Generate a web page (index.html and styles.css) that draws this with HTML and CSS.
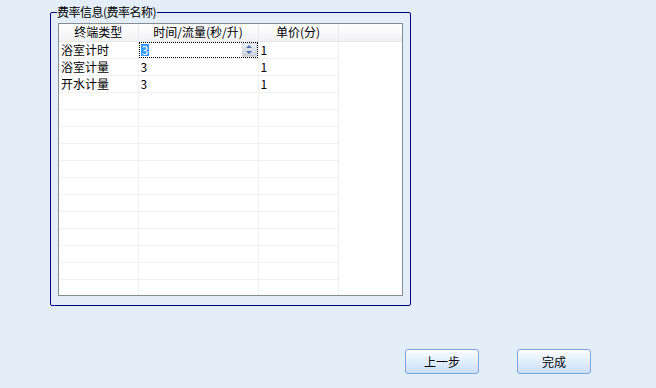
FILE: index.html
```html
<!DOCTYPE html>
<html lang="zh-CN">
  <head>
    <meta charset="UTF-8" />
    <title>费率信息</title>
    <link rel="stylesheet" href="styles.css">
  </head>
  <body>
    <fieldset class="group">
      <legend>费率信息(费率名称)</legend>
      <div class="grid">
        <table>
          <thead>
            <tr>
              <th class="c1">终端类型</th>
              <th class="c2">时间/流量(秒/升)</th>
              <th class="c3">单价(分)</th>
              <th class="c4"></th>
            </tr>
          </thead>
          <tbody id="rows">
            <tr>
              <td>浴室计时</td>
              <td class="edit">
                <div class="spin">
                  <span class="sel">3</span>
                  <span class="arrows">
                    <i class="up"></i>
                    <i class="down"></i>
                  </span>
                </div>
              </td>
              <td>1</td>
              <td class="blank"></td>
            </tr>
            <tr>
              <td>浴室计量</td>
              <td>3</td>
              <td>1</td>
              <td class="blank"></td>
            </tr>
            <tr>
              <td>开水计量</td>
              <td>3</td>
              <td>1</td>
              <td class="blank"></td>
            </tr>
          </tbody>
        </table>
      </div>
    </fieldset>

    <div class="btns">
      <button>上一步</button>
      <button>完成</button>
    </div>
    <script>
      // fill the empty grid lines
      let tbody = document.getElementById("rows");
      for (let i = 0; i < 12; i++) {
        let tr = tbody.insertRow(-1);
        for (let j = 0; j < 4; j++) {
          let td = tr.insertCell(j);
          if (j == 3) td.className = "blank";
        }
      }
    </script>
  </body>
</html>
```

FILE: styles.css
```css
* {
  padding: 0;
  margin: 0;
  box-sizing: border-box;
}
html,
body {
  height: 100%;
}
body {
  background: #e3eef9;
  font-family: "Noto Sans CJK SC", "DejaVu Sans", sans-serif;
  font-size: 12px;
  color: #000;
  overflow: hidden;
}
.group {
  width: 361px;
  height: 301px;
  margin: 5px 0 0 50px;
  border: 1px solid #000080;
  border-radius: 2px;
  padding: 4px 7px 9px 7px;
}
.group legend {
  padding: 0 1px 0 0;
  margin-left: -1px;
  line-height: 13px;
  height: 14px;
  font-size: 12px;
  letter-spacing: -0.5px;
}
.grid {
  width: 345px;
  height: 273px;
  border: 1px solid #858b93;
  background: #fff;
  overflow: hidden;
}
table {
  border-collapse: collapse;
  table-layout: fixed;
  width: 343px;
}
th,
td {
  height: 17px;
  padding: 0 0 0 2px;
  line-height: 16px;
  font-weight: normal;
  text-align: left;
  white-space: nowrap;
  border-right: 1px solid #f0f0f0;
  border-bottom: 1px solid #f0f0f0;
  overflow: hidden;
}
th {
  text-align: center;
  padding: 0;
  background: linear-gradient(#ffffff, #f2f2f4);
  border-bottom: 1px solid #e4e6ea;
  border-right: 1px solid #e8e8ea;
}
.c1 {
  width: 79px;
}
.c2 {
  width: 120px;
}
.c3 {
  width: 80px;
}
.blank,
.c4 {
  border-right: none;
}
td.blank {
  border-bottom: none;
}
td.edit {
  padding: 0;
}
.spin {
  display: flex;
  align-items: center;
  justify-content: space-between;
  height: 16px;
  border: 1px dotted #000;
  padding-left: 1px;
}
.sel {
  background: #3399ff;
  color: #fff;
  line-height: 12px;
  padding: 0 1px;
}
.arrows {
  display: flex;
  flex-direction: column;
  width: 15px;
  height: 14px;
  background: linear-gradient(#eef0f4, #c8ced8);
  border: 1px solid #d6dae2;
}
.arrows i {
  flex: 1;
  display: flex;
  justify-content: center;
  align-items: center;
}
.arrows i::after {
  content: "";
  border-left: 3px solid transparent;
  border-right: 3px solid transparent;
}
.up::after {
  border-bottom: 3px solid #4c6fb4;
}
.down::after {
  border-top: 3px solid #4c6fb4;
}
.btns {
  display: flex;
  gap: 38px;
  margin: 43px 0 0 405px;
}
button {
  width: 74px;
  height: 25px;
  border: 1px solid #7ba4dc;
  border-radius: 3px;
  background: linear-gradient(#fbfdff, #c9def6);
  font-family: "Noto Sans CJK SC", "DejaVu Sans", sans-serif;
  font-size: 12px;
  color: #000;
}
```
